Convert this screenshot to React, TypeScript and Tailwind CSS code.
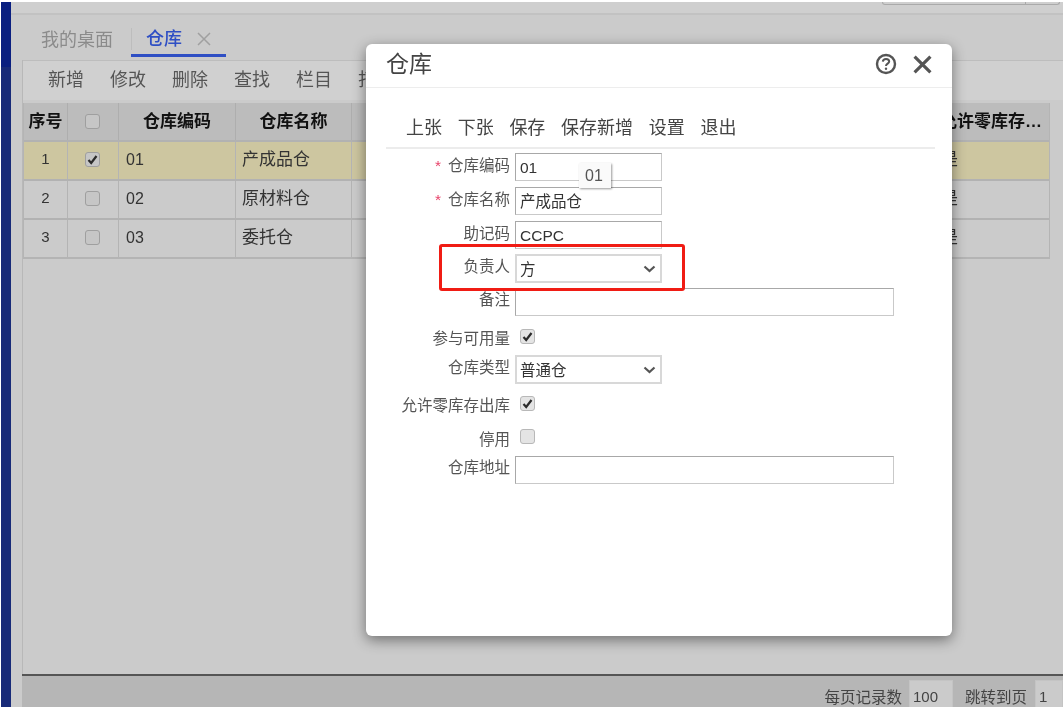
import React from "react";

const font = { fontFamily: '"Liberation Sans","Noto Sans CJK SC",sans-serif' };

function Check({ checked, dim }: { checked?: boolean; dim?: boolean }) {
  return (
    <span className={`flex h-[15px] w-[15px] items-center justify-center rounded-[3px] border ${dim ? "border-[#9f9f9f] bg-[#c6c6c6]" : "border-[#b8b8b8] bg-[#e4e4e4]"}`}>
      {checked && (
        <svg width="11" height="11" viewBox="0 0 11 11">
          <path d="M1.5 6 L4.2 9 L9.5 2" fill="none" stroke="#2b2b2b" strokeWidth="2.2" />
        </svg>
      )}
    </span>
  );
}

function Chevron() {
  return (
    <svg width="13" height="8" viewBox="0 0 13 8" className="shrink-0">
      <path d="M1.5 1.5 L6.5 6 L11.5 1.5" fill="none" stroke="#555" strokeWidth="2.2" />
    </svg>
  );
}

function Field({ label, req, h, mb, children, labelPad = "pt-[3px]" }: { label: string; req?: boolean; h: string; mb: string; children: React.ReactNode; labelPad?: string }) {
  return (
    <div className={`flex ${h} ${mb}`}>
      <div className={`w-[144px] shrink-0 whitespace-nowrap text-right text-[15.5px] leading-[20px] text-[#555] ${labelPad}`}>
        {req && <span className="mr-[7px] text-[#e8436a]">*</span>}
        {label}
      </div>
      <div className="ml-[5px] flex-1">{children}</div>
    </div>
  );
}

function Input({ value, wide }: { value?: string; wide?: boolean }) {
  return (
    <div className={`flex h-full items-center border border-[#c9c9c9] border-t-[#a8a8a8] border-l-[#a8a8a8] bg-white pl-[4px] pt-[1px] text-[15.5px] text-[#333] ${wide ? "w-[379px]" : "w-[147px]"}`}>
      {value}
    </div>
  );
}

function Select({ value }: { value: string }) {
  return (
    <div className="flex h-full w-[147px] items-center justify-between border-2 border-[#d8d8d8] bg-white pl-[3px] pr-[4px] text-[15.5px] text-[#333]">
      <span className="pt-[3px]">{value}</span>
      <Chevron />
    </div>
  );
}

const rows = [
  { n: "1", code: "01", name: "产成品仓", on: true },
  { n: "2", code: "02", name: "原材料仓" },
  { n: "3", code: "03", name: "委托仓" },
];

const cols = "grid grid-cols-[44px_51px_117px_116px_1fr_110px]";

export default function App() {
  return (
    <div style={font} className="relative h-[707px] w-[1063px] overflow-hidden bg-[#cbcbcb] blur-[0.5px]">
      <div className="h-[2px] bg-white" />
      <div className="flex h-[705px]">
        <div className="flex w-[11px] shrink-0 flex-col border-l border-white">
          <div className="h-[65px] bg-[#0a1f80]" />
          <div className="flex-1 bg-[#182a78]" />
        </div>
        <div className="flex min-w-0 flex-1 flex-col">
          {/* top bar */}
          <div className="flex h-[13px] justify-end border-b-2 border-[#c2c2c2] bg-[#cfcfcf] pr-[3px]">
            <div className="flex h-[3px] w-[178px] rounded-b-[3px] border border-t-0 border-[#aaa]">
              <div className="flex-1 border-r border-[#aaa]" />
              <div className="w-[33px]" />
            </div>
          </div>
          {/* tabs */}
          <div className="flex h-[45px] items-start pl-[30px] pt-[13px]">
            <div className="text-[18px] leading-[24px] text-[#8b8b8b]">我的桌面</div>
            <div className="ml-[18px] h-[29px] w-[95px] border-b-[3px] border-[#2f4fc4]">
              <div className="flex h-[22px] items-center border-l border-[#bdbdbd] pl-[14px] text-[18px] font-medium text-[#2f4fc4]">
                仓库
                <svg width="14" height="14" viewBox="0 0 14 14" className="ml-[15px]">
                  <path d="M1 1 L13 13 M13 1 L1 13" stroke="#a0a0a0" strokeWidth="1.5" />
                </svg>
              </div>
            </div>
          </div>
          <div className="flex min-h-0 flex-1 flex-col pl-[11px]">
            <div className="flex min-h-0 flex-1 flex-col border-l border-[#b8b8b8]">
              {/* toolbar */}
              <div className="flex h-[40px] shrink-0 items-center gap-[26px] border-t border-[#bdbdbd] bg-[#d0d0d0] pl-[25px] text-[18px] text-[#555]">
                {["新增", "修改", "删除", "查找", "栏目", "打印"].map((t) => (
                  <span key={t}>{t}</span>
                ))}
              </div>
              {/* table */}
              <div className="mt-[3px] mr-[13px] shrink-0 border-x border-b-2 border-[#b4b4b4] text-[17px]">
                <div className={`${cols} h-[37px] bg-[#bcbcbc] font-bold text-[#111]`}>
                  <div className="flex items-center justify-center border-r border-[#aeaeae]">序号</div>
                  <div className="flex items-center justify-center border-r border-[#aeaeae] pr-[1px]"><Check dim /></div>
                  <div className="flex items-center justify-center border-r border-[#aeaeae]">仓库编码</div>
                  <div className="flex items-center justify-center border-r border-[#aeaeae]">仓库名称</div>
                  <div className="border-r border-[#aeaeae]" />
                  <div className="flex items-center whitespace-nowrap pl-[1px]">允许零库存…</div>
                </div>
                {rows.map((r) => (
                  <div key={r.n} className={`${cols} h-[39px] border-t-2 border-[#b2b2b2] text-[#333] ${r.on ? "bg-[#cdc6a0]" : "bg-[#cbcbcb]"}`}>
                    <div className="flex items-center justify-center border-r border-[#b4b4b4] pb-[2px] text-[15px]">{r.n}</div>
                    <div className="flex items-center justify-center border-r border-[#b4b4b4] pb-[2px] pr-[1px]"><Check checked={r.on} dim /></div>
                    <div className="flex items-center border-r border-[#b4b4b4] pb-[2px] pl-[7px] text-[16px]">{r.code}</div>
                    <div className="flex items-center border-r border-[#b4b4b4] pb-[2px] pl-[6px]">{r.name}</div>
                    <div className="border-r border-[#b4b4b4]" />
                    <div className="flex items-center pb-[2px] pl-[2px]">是</div>
                  </div>
                ))}
              </div>
              <div className="flex-1" />
            </div>
            {/* footer */}
            <div className="flex h-[33px] shrink-0 items-start justify-end overflow-hidden border-t-2 border-[#555] bg-[#b6b6b6] pt-[4px] text-[15.5px] leading-[27px] text-[#444]">
              <span className="pt-[4px]">每页记录数</span>
              <span className="ml-[7px] flex h-[30px] w-[44px] items-center border border-[#c4c4c4] bg-[#cbcbcb] pl-[3px] pt-[3px] text-[15px]">100</span>
              <span className="ml-[12px] pt-[4px]">跳转到页</span>
              <span className="ml-[8px] flex h-[30px] w-[28px] items-center border border-[#c4c4c4] bg-[#cbcbcb] pl-[3px] pt-[3px] text-[15px]">1</span>
            </div>
          </div>
        </div>
      </div>

      {/* modal */}
      <div className="absolute left-[366px] top-[44px] flex h-[592px] w-[586px] flex-col rounded-[6px] bg-white shadow-[0_4px_14px_rgba(0,0,0,0.45)]">
        <div className="flex h-[44px] shrink-0 items-center justify-between border-b border-[#ededed] pb-[3px] pl-[20px] pr-[20px]">
          <span className="text-[23px] text-[#444]">仓库</span>
          <div className="flex items-center gap-[16px]">
            <svg width="22" height="22" viewBox="0 0 22 22">
              <circle cx="11" cy="11" r="9" fill="none" stroke="#555" strokeWidth="2.4" />
              <path d="M7.8 8.6 C8 6.6 9.4 5.9 11 5.9 C12.8 5.9 14.2 7 14.2 8.6 C14.2 10.6 11 10.8 11 13" fill="none" stroke="#555" strokeWidth="2" />
              <circle cx="11" cy="15.8" r="1.2" fill="#555" />
            </svg>
            <svg width="19" height="19" viewBox="0 0 18 18">
              <path d="M1.5 1.5 L16.5 16.5 M16.5 1.5 L1.5 16.5" stroke="#555" strokeWidth="3" />
            </svg>
          </div>
        </div>
        <div className="ml-[20px] mr-[17px] mt-[16px] flex h-[45px] shrink-0 items-end gap-[15.7px] border-b-2 border-[#ececec] pb-[7px] pl-[20px] text-[18px] leading-[24px] text-[#444]">
          {["上张", "下张", "保存", "保存新增", "设置", "退出"].map((t) => (
            <span key={t}>{t}</span>
          ))}
        </div>
        <div className="mt-[4px] flex flex-col">
          <Field label="仓库编码" req h="h-[28px]" mb="mb-[6px]"><Input value="01" /></Field>
          <Field label="仓库名称" req h="h-[28px]" mb="mb-[6px]"><Input value="产成品仓" /></Field>
          <Field label="助记码" h="h-[28px]" mb="mb-[5px]"><Input value="CCPC" /></Field>
          <Field label="负责人" h="h-[29px]" mb="mb-[5px]"><Select value="方" /></Field>
          <Field label="备注" h="h-[28px]" mb="mb-[13px]" labelPad="pt-[2px]"><Input wide /></Field>
          <Field label="参与可用量" h="h-[20px]" mb="mb-[6px]" labelPad="pt-0"><div className="pl-[5px]"><Check checked /></div></Field>
          <Field label="仓库类型" h="h-[29px]" mb="mb-[12px]" labelPad="pt-[3px]"><Select value="普通仓" /></Field>
          <Field label="允许零库存出库" h="h-[20px]" mb="mb-[13px]" labelPad="pt-0"><div className="pl-[5px]"><Check checked /></div></Field>
          <Field label="停用" h="h-[20px]" mb="mb-[7px]" labelPad="pt-[1px]"><div className="pl-[5px]"><Check /></div></Field>
          <Field label="仓库地址" h="h-[28px]" mb="mb-0" labelPad="pt-[2px]"><Input wide /></Field>
        </div>
        {/* tooltip */}
        <div className="absolute left-[213px] top-[119px] flex h-[25px] w-[32px] items-center justify-center bg-[#fafafa] pr-[2px] text-[16px] text-[#555] shadow-[1px_1px_2px_rgba(0,0,0,0.4)]">01</div>
        {/* highlight */}
        <div className="absolute left-[73px] top-[200px] h-[47px] w-[246px] rounded-[3px] border-[3px] border-[#f01c14]" />
      </div>
    </div>
  );
}
